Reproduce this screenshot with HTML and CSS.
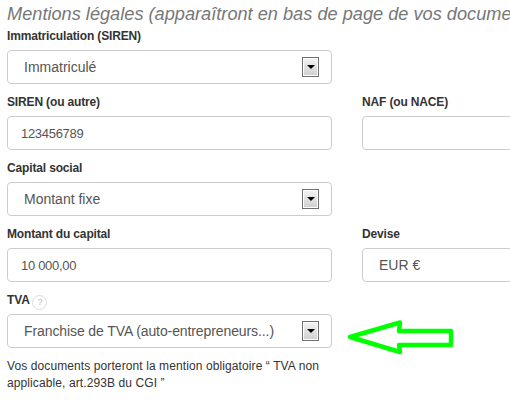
FILE: index.html
```html
<!DOCTYPE html>
<html lang="fr">
<head>
<meta charset="utf-8">
<title>Mentions légales</title>
<link rel="stylesheet" href="styles.css">
</head>
<body>
<h2 class="title">Mentions légales (apparaîtront en bas de page de vos docume</h2>
<div class="form">
  <div class="field first">
    <label class="label">Immatriculation (SIREN)</label>
    <div class="box select"><span>Immatriculé</span><span class="btn"><i class="caret"></i></span></div>
  </div>
  <div class="field first"></div>
  <div class="field">
    <label class="label">SIREN (ou autre)</label>
    <div class="box input">123456789</div>
  </div>
  <div class="field">
    <label class="label">NAF (ou NACE)</label>
    <div class="box input"></div>
  </div>
  <div class="field">
    <label class="label">Capital social</label>
    <div class="box select"><span>Montant fixe</span><span class="btn"><i class="caret"></i></span></div>
  </div>
  <div class="field"></div>
  <div class="field">
    <label class="label">Montant du capital</label>
    <div class="box input">10 000,00</div>
  </div>
  <div class="field">
    <label class="label">Devise</label>
    <div class="box input devise">EUR €</div>
  </div>
  <div class="field">
    <label class="label">TVA <span class="help">?</span></label>
    <div class="box select"><span class="long">Franchise de TVA (auto-entrepreneurs...)</span><span class="btn"><i class="caret"></i></span></div>
    <p class="note">Vos documents porteront la mention obligatoire “ TVA non applicable, art.293B du CGI ”</p>
  </div>
</div>
<svg class="arrow" width="112" height="44" viewBox="0 0 112 44" aria-hidden="true">
  <path d="M4 21 L54 6.500 L53 15 L105 15 L105 29 L53 29 L54 36 Z" fill="#fff" stroke="#00ff00" stroke-width="4.500" stroke-linejoin="round"/>
</svg>
</body>
</html>
```
FILE: styles.css
```css
html, body {
  margin: 0;
  padding: 0;
  background: #fff;
}
body {
  width: 510px;
  height: 403px;
  overflow: hidden;
  position: relative;
  font-family: "Liberation Sans", Arial, sans-serif;
  color: #333;
}
.title {
  margin: 0;
  padding: 2px 0 0 7px;
  height: 25px;
  line-height: 24px;
  font-size: 18.2px;
  font-weight: 400;
  font-style: italic;
  color: #777;
  white-space: nowrap;
}
.form {
  display: grid;
  grid-template-columns: 325px 141px;
  column-gap: 30px;
  padding-left: 7px;
}
.field {
  height: 66px;
}
.field.first {
  height: 65px;
}
.label {
  display: block;
  height: 24px;
  padding-top: 3px;
  box-sizing: border-box;
  line-height: 14px;
  font-size: 12px;
  letter-spacing: -0.15px;
  font-weight: 700;
  color: #333;
}
.first .label {
  height: 23px;
  padding-top: 2px;
}
.box {
  box-sizing: border-box;
  height: 34px;
  border: 1px solid #ccc;
  border-radius: 4px;
  background: #fff;
  display: flex;
  align-items: center;
  color: #555;
}
.field:nth-child(even) .box {
  margin-right: -10px;
}
.select {
  justify-content: space-between;
  padding: 0 12px 0 16px;
  font-size: 14px;
}
.long {
  letter-spacing: -0.1px;
}
.input {
  padding-left: 13px;
  font-size: 13px;
  letter-spacing: -0.3px;
}
.devise {
  padding-left: 16px;
  font-size: 14px;
  letter-spacing: 0;
}
.btn {
  box-sizing: border-box;
  width: 17px;
  height: 20px;
  border: 1px solid #707070;
  background: linear-gradient(#f4f4f4, #cfcfcf);
  box-shadow: inset 0 0 0 1px #fff;
  display: flex;
  align-items: center;
  justify-content: center;
}
.caret {
  width: 0;
  height: 0;
  border-left: 4px solid transparent;
  border-right: 4px solid transparent;
  border-top: 4px solid #000;
}
.help {
  display: inline-block;
  box-sizing: border-box;
  width: 15px;
  height: 15px;
  border: 1px solid #ddd;
  border-radius: 50%;
  font-size: 9px;
  line-height: 13px;
  font-weight: 400;
  text-align: center;
  color: #bbb;
  vertical-align: -1px;
  letter-spacing: 0;
}
.note {
  margin: 10px 0 0;
  width: 320px;
  font-size: 12px;
  letter-spacing: 0.1px;
  line-height: 17px;
  color: #333;
}
.arrow {
  position: absolute;
  left: 346px;
  top: 316px;
}
```
